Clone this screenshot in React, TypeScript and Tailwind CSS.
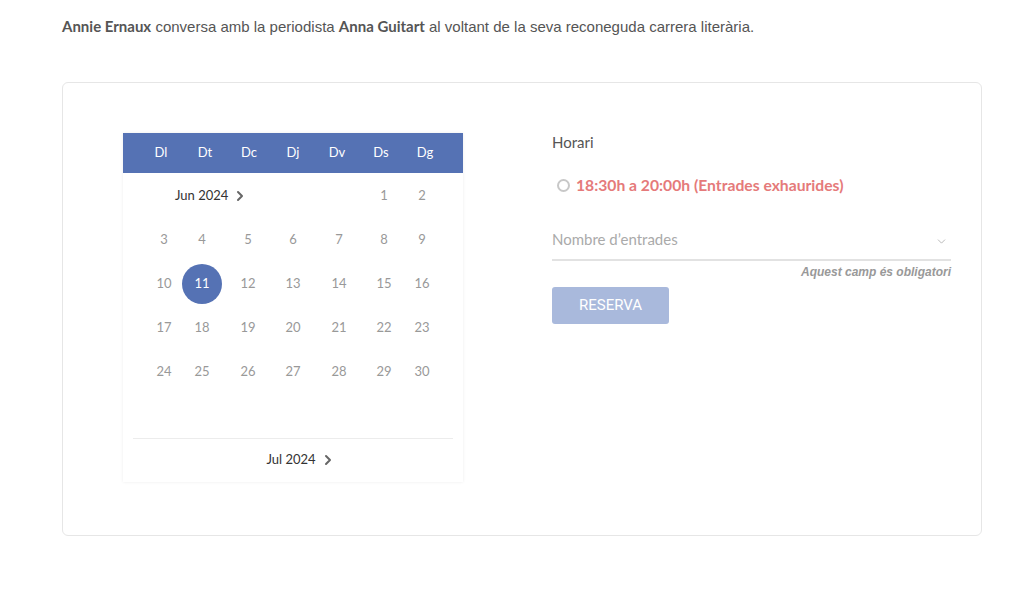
import { ChevronRight, ChevronDown } from 'lucide-react';

const SANS = "font-['Lato','Noto_Sans',sans-serif]";

const dayLabels = ['Dl', 'Dt', 'Dc', 'Dj', 'Dv', 'Ds', 'Dg'];
const weeks = [
  [3, 4, 5, 6, 7, 8, 9],
  [10, 11, 12, 13, 14, 15, 16],
  [17, 18, 19, 20, 21, 22, 23],
  [24, 25, 26, 27, 28, 29, 30],
];

const Calendar = () => {
  return (
    <div className={`w-[340px] shrink-0 self-start shadow-[0_0_3px_rgba(0,0,0,0.08)] ${SANS}`}>
      <div className="h-[40px] bg-[#5572b4] px-[16px] grid grid-cols-7 items-center text-[13px] text-white">
        {dayLabels.map((d) => (
          <div key={d} className="text-center">{d}</div>
        ))}
      </div>
      <div className="pt-[1px] pb-[1px] bg-white">
        <div className="pl-[16px] grid grid-cols-[50px_26px_66px_24px_68px_22px_54px] auto-rows-[44px] items-center text-[13px] text-[#999]">
          <div className="col-span-5 pl-[36px] flex items-center text-[#333]">
            Jun 2024
            <ChevronRight className="w-4 h-4 ml-[4px] text-[#666]" strokeWidth={3} />
          </div>
          <div className="text-center">1</div>
          <div className="text-center">2</div>
          {weeks.flat().map((n) => (
            <div key={n} className="flex justify-center">
              {n === 11 ? (
                <span className="w-[40px] h-[40px] shrink-0 rounded-full bg-[#5572b4] text-white flex items-center justify-center">11</span>
              ) : (
                n
              )}
            </div>
          ))}
        </div>
        <div className="mx-[10px] mt-[44px] border-t border-[#ececec]" />
        <div className="h-[42px] pl-[16px] flex items-center justify-center text-[13px] text-[#333]">
          Jul 2024
          <ChevronRight className="w-4 h-4 ml-[4px] text-[#666]" strokeWidth={3} />
        </div>
      </div>
    </div>
  );
};

const BookingPanel = () => {
  return (
    <div className={`w-[399px] pt-[1px] ${SANS}`}>
      <div className="text-[15px] text-[#555] mt-[-3px]">Horari</div>
      <div className="mt-[21px] flex items-center pl-[5px]">
        <span className="w-[13px] h-[13px] rounded-full border-2 border-[#c8c8c8] mr-[6px]" />
        <span className="text-[15.7px] font-bold text-[#e57a7a]">18:30h a 20:00h (Entrades exhaurides)</span>
      </div>
      <div className="mt-[30px] border-b-2 border-[#e2e2e2] h-[33px] flex items-start justify-between">
        <span className="text-[15px] text-[#aaa]">Nombre d’entrades</span>
        <ChevronDown className="w-[13px] h-[13px] text-[#aaa] mt-[7px] mr-[3px]" strokeWidth={1.5} />
      </div>
      <div className="text-right text-[12px] italic font-bold text-[#999] font-['Liberation_Sans',Arial,sans-serif] mt-[2px]">
        Aquest camp és obligatori
      </div>
      <button className="mt-[6px] w-[117px] h-[37px] rounded-[3px] bg-[#a9b9dc] text-white text-[15px] font-normal font-['Roboto',sans-serif]">
        RESERVA
      </button>
    </div>
  );
};

const App = () => {
  return (
    <div className="min-h-screen bg-white px-[62px] pt-[15px]">
      <p className="text-[15px] text-[#555] font-['Liberation_Sans',Arial,sans-serif]">
        <b className={`font-bold ${SANS}`}>Annie Ernaux</b> conversa amb la periodista{' '}
        <b className={`font-bold ${SANS}`}>Anna Guitart</b> al voltant de la seva reconeguda carrera literària.
      </p>
      <div className="mt-[43px] w-[920px] h-[454px] rounded-[6px] border border-[#e6e6e6] pt-[50px] pl-[60px] flex gap-[89px]">
        <Calendar />
        <BookingPanel />
      </div>
    </div>
  );
};

export default App;
